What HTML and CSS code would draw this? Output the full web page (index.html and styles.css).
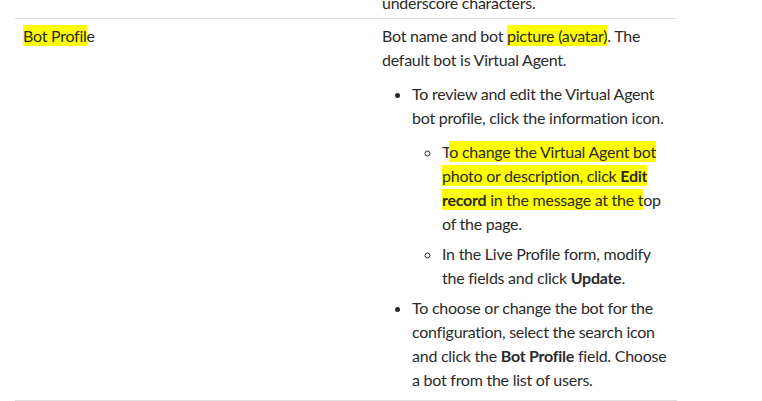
FILE: index.html
```html
<!DOCTYPE html>
<html lang="en">
<head>
    <meta charset="UTF-8">
    <title>Bot Profile</title>
    <link rel="stylesheet" href="styles.css">
</head>
<body>
    <table class="props">
        <tr class="row-prev">
            <td class="name"></td>
            <td class="desc">underscore characters.</td>
        </tr>
        <tr>
            <td class="name"><span class="mark">Bot Profil</span>e</td>
            <td class="desc">
                <p>Bot name and bot <span class="mark">picture (avatar)</span>. The default bot is Virtual Agent.</p>
                <ul>
                    <li>To review and edit the Virtual Agent bot profile, click the information icon.
                        <ul>
                            <li>T<span class="mark">o change the Virtual Agent bot photo or description, click <b>Edit record</b> in the message at the t</span>op of the page.</li>
                            <li>In the Live Profile form, modify the fields and click <b>Update</b>.</li>
                        </ul>
                    </li>
                    <li>To choose or change the bot for the configuration, select the search icon and click the <b>Bot Profile</b> field. Choose a bot from the list of users.</li>
                </ul>
            </td>
        </tr>
    </table>
</body>
</html>
```

FILE: styles.css
```css
body {
    margin: 0;
    padding: 0;
    background-color: #fff;
    color: #2b2b2b;
    font-family: Lato, 'Noto Sans', sans-serif;
    font-size: 16px;
    letter-spacing: -0.25px;
    line-height: 24px;
    overflow: hidden;
}
.props {
    border-collapse: collapse;
    margin: -9px 0 0 15px;
    width: 662px;
    table-layout: fixed;
}
.props td {
    vertical-align: top;
    padding: 5px 8px 8px 8px;
    border-bottom: 1px solid #dedede;
}
.props .name {
    width: 343px;
}
.row-prev td {
    padding-top: 0;
    padding-bottom: 3px;
}
.desc p {
    margin: 0 0 10px 0;
}
.desc ul {
    margin: 0;
    padding-left: 30px;
}
.desc ul ul {
    margin-top: 10px;
    list-style-type: circle;
}
.desc li + li {
    margin-top: 6px;
}
.mark {
    background-color: #ffff00;
    padding: 1px 0;
    -webkit-box-decoration-break: clone;
    box-decoration-break: clone;
}
```
